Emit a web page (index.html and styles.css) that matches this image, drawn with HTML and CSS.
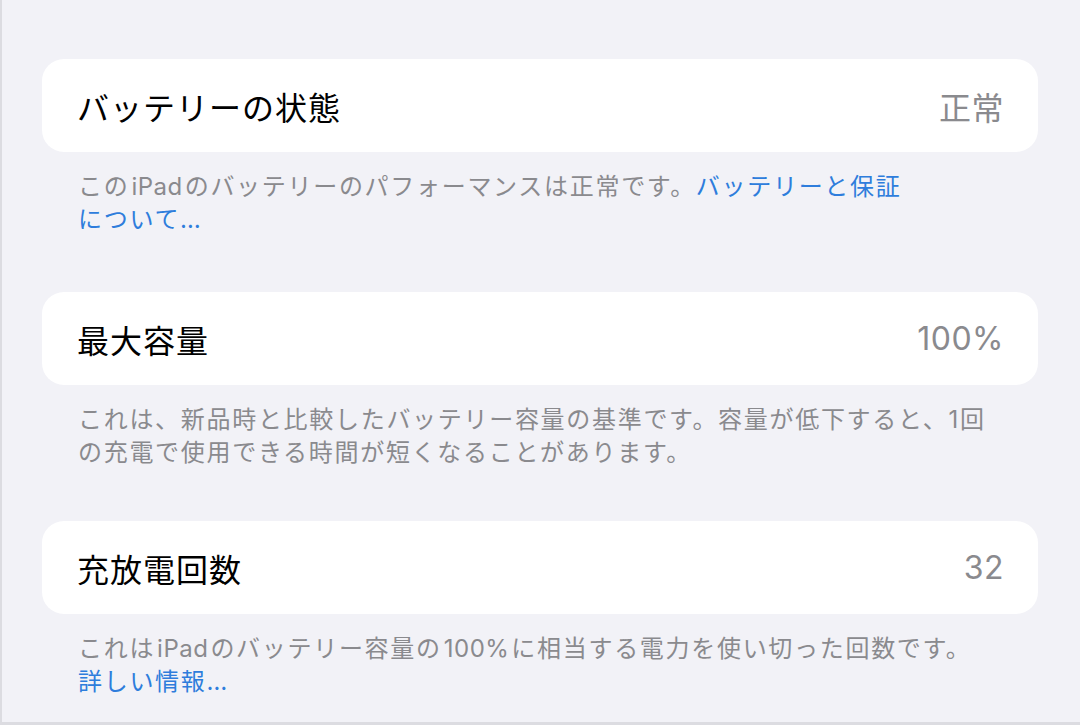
FILE: index.html
```html
<!DOCTYPE html>
<html lang="ja">
<head>
    <meta charset="UTF-8">
    <meta name="viewport" content="width=device-width, initial-scale=1.0">
    <title>バッテリーの状態</title>
    <link rel="stylesheet" href="styles.css">
</head>
<body>
    <div class="page">
        <section class="group">
            <div class="cell">
                <span class="cell-title">バッテリーの状態</span>
                <span class="cell-value">正常</span>
            </div>
            <p class="footer">この<span class="latin">iPad</span>のバッテリーのパフォーマンスは正常です。<a class="link" href="#">バッテリーと保証<br>について…</a></p>
        </section>

        <section class="group">
            <div class="cell">
                <span class="cell-title">最大容量</span>
                <span class="cell-value">100%</span>
            </div>
            <p class="footer">これは、新品時と比較したバッテリー容量の基準です。容量が低下すると、1回<br>の充電で使用できる時間が短くなることがあります。</p>
        </section>

        <section class="group">
            <div class="cell">
                <span class="cell-title">充放電回数</span>
                <span class="cell-value">32</span>
            </div>
            <p class="footer">これは<span class="latin">iPad</span>のバッテリー容量の<span class="latin">100%</span>に相当する電力を使い切った回数です。<br><a class="link" href="#">詳しい情報…</a></p>
        </section>
    </div>
</body>
</html>
```

FILE: styles.css
```css
/* Settings > Battery > Battery Health */
html, body {
    margin: 0;
    padding: 0;
}
body {
    font-family: Inter, "Noto Sans CJK JP", "Noto Sans", sans-serif;
    background-color: #f2f2f7;
}
.page {
    box-sizing: border-box;
    height: 725px;
    overflow: hidden;
    padding: 59px 42px 0 40px;
    border-left: 2px solid #dcdce1;
    border-bottom: 3px solid #dcdce1;
}
.group {
    margin-bottom: 52px;
}
.group:first-child {
    margin-bottom: 56px;
}
.cell {
    display: flex;
    align-items: center;
    justify-content: space-between;
    height: 93px;
    padding: 0 34px 0 35px;
    background-color: white;
    border-radius: 22px;
}
.cell-title {
    font-size: 32px;
    letter-spacing: 1px;
    color: #000;
}
.cell-value {
    font-size: 32px;
    letter-spacing: 0.5px;
    color: #8a8a8e;
}
.footer {
    margin: 0;
    padding: 18px 36px 0 36px;
    font-size: 24px;
    line-height: 33px;
    letter-spacing: 1.7px;
    color: #8a8a8e;
}
.latin {
    margin: 0 2px;
    letter-spacing: 0.5px;
}
.link {
    color: #2e7ddc;
    text-decoration: none;
}
```
